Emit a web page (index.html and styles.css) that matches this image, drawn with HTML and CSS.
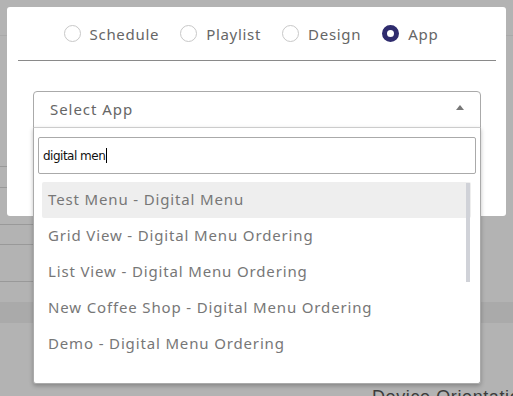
FILE: index.html
```html
<!DOCTYPE html>
<html>
<head>
  <title>Select App</title>
  <link rel="stylesheet" href="styles.css">
</head>
<body>
  <div class="page">
    <div class="page-top"></div>
    <div class="page-rows">
      <div class="page-row r1"></div>
      <div class="page-row r2"></div>
      <div class="page-row r3"></div>
      <div class="page-row r4"></div>
      <div class="page-row r5"></div>
      <div class="page-row r6"></div>
      <div class="page-row r7"></div>
    </div>
    <div class="page-band"></div>
    <div class="page-footer">Device Orientation</div>
  </div>

  <div class="modal">
    <div class="tabs">
      <label class="tab"><span class="radio"></span>Schedule</label>
      <label class="tab"><span class="radio"></span>Playlist</label>
      <label class="tab"><span class="radio"></span>Design</label>
      <label class="tab"><span class="radio checked"></span>App</label>
    </div>
    <div class="divider"></div>

    <div class="select">
      <div class="select-head">
        <span>Select App</span>
        <span class="caret"></span>
      </div>
      <div class="select-menu">
        <div class="search">digital men<span class="cursor"></span></div>
        <div class="options-wrap">
          <ul class="options">
            <li class="active">Test Menu - Digital Menu</li>
            <li>Grid View - Digital Menu Ordering</li>
            <li>List View - Digital Menu Ordering</li>
            <li>New Coffee Shop - Digital Menu Ordering</li>
            <li>Demo - Digital Menu Ordering</li>
            <li>Bakery - Digital Menu Ordering</li>
            <li>Lobby Screen - Digital Menu</li>
            <li>Drive Thru - Digital Menu</li>
            <li>Bar Specials - Digital Menu</li>
          </ul>
          <div class="scroll-thumb"></div>
        </div>
      </div>
    </div>
  </div>
</body>
</html>
```

FILE: styles.css
```css
* {
  box-sizing: border-box;
}
body {
  margin: 0;
  background: #b3b3b3;
  font-family: 'Noto Sans', sans-serif;
  overflow: hidden;
  width: 513px;
  height: 396px;
}

/* dimmed page behind the modal */
.page {
  display: flex;
  flex-direction: column;
}
.page-top {
  height: 36px;
  border-bottom: 1px solid #a9a9a9;
}
.page-rows {
  width: 200px;
}
.page-row {
  border-bottom: 1px solid #999;
}
.r1 { height: 96px; border-bottom-color: #b3b3b3; }
.r2 { height: 35px; }
.r3 { height: 21px; }
.r4 { height: 37px; }
.r5 { height: 20px; }
.r6 { height: 37px; }
.r7 { height: 19px; border-bottom: none; }
.page-band {
  height: 21px;
  margin-top: 1px;
  background: #aaa;
}
.page-footer {
  margin-top: 65px;
  padding-left: 372px;
  font-size: 18px;
  line-height: 18px;
  color: #3c3c3c;
  font-family: 'Liberation Sans', sans-serif;
  letter-spacing: 0.6px;
  white-space: nowrap;
}

/* modal */
.modal {
  position: absolute;
  left: 7px;
  top: 7px;
  width: 499px;
  height: 209px;
  background: #fff;
  border-radius: 3px;
  padding: 0 10px 0 11px;
}
.tabs {
  height: 53px;
  display: flex;
  justify-content: center;
  align-items: center;
  gap: 21px;
  padding-right: 12px;
}
.tab {
  display: flex;
  align-items: center;
  gap: 9px;
  font-size: 15px;
  color: #666;
  letter-spacing: 0.7px;
}
.radio {
  width: 17px;
  height: 17px;
  border-radius: 50%;
  border: 1px solid #c8c8c8;
}
.radio.checked {
  border: 5px solid #2f2c6e;
}
.divider {
  height: 1px;
  background: #8a8a8a;
}

/* select */
.select {
  position: relative;
  margin: 30px 15px 0 15px;
}
.select-head {
  height: 37px;
  border: 1px solid #aaa;
  border-radius: 4px 4px 0 0;
  display: flex;
  align-items: center;
  justify-content: space-between;
  padding: 0 16px 2px 16px;
  font-size: 15px;
  color: #666;
  letter-spacing: 0.95px;
}
.caret {
  width: 0;
  height: 0;
  border-left: 4px solid transparent;
  border-right: 4px solid transparent;
  border-bottom: 5px solid #777;
  margin-top: -2px;
}
.select-menu {
  position: absolute;
  top: 36px;
  left: 0;
  right: 0;
  height: 257px;
  background: #fff;
  border: 1px solid #aaa;
  border-top-color: #ccc;
  border-radius: 0 0 3px 3px;
  box-shadow: 0 2px 4px rgba(0, 0, 0, 0.25);
  padding: 9px 4px 0 4px;
}
.search {
  height: 37px;
  border: 1px solid #aaa;
  border-radius: 2px;
  display: flex;
  align-items: center;
  padding-left: 4px;
  font-size: 12px;
  color: #111;
  font-family: 'DejaVu Sans', sans-serif;
  letter-spacing: -0.5px;
}
.cursor {
  width: 1px;
  height: 15px;
  background: #000;
  margin-left: 1px;
}
.options-wrap {
  position: relative;
  margin: 8px 5px 0 4px;
}
.options {
  list-style: none;
  margin: 0;
  padding: 0;
  height: 180px;
  overflow: hidden;
}
.options li {
  height: 36px;
  line-height: 35px;
  padding-left: 6px;
  font-size: 15px;
  color: #777;
  letter-spacing: 0.85px;
  white-space: nowrap;
}
.options li.active {
  background: #eee;
  border-radius: 2px;
}
.scroll-thumb {
  position: absolute;
  top: 1px;
  right: 1px;
  width: 4px;
  height: 99px;
  background: #d0d2d8;
}
```
